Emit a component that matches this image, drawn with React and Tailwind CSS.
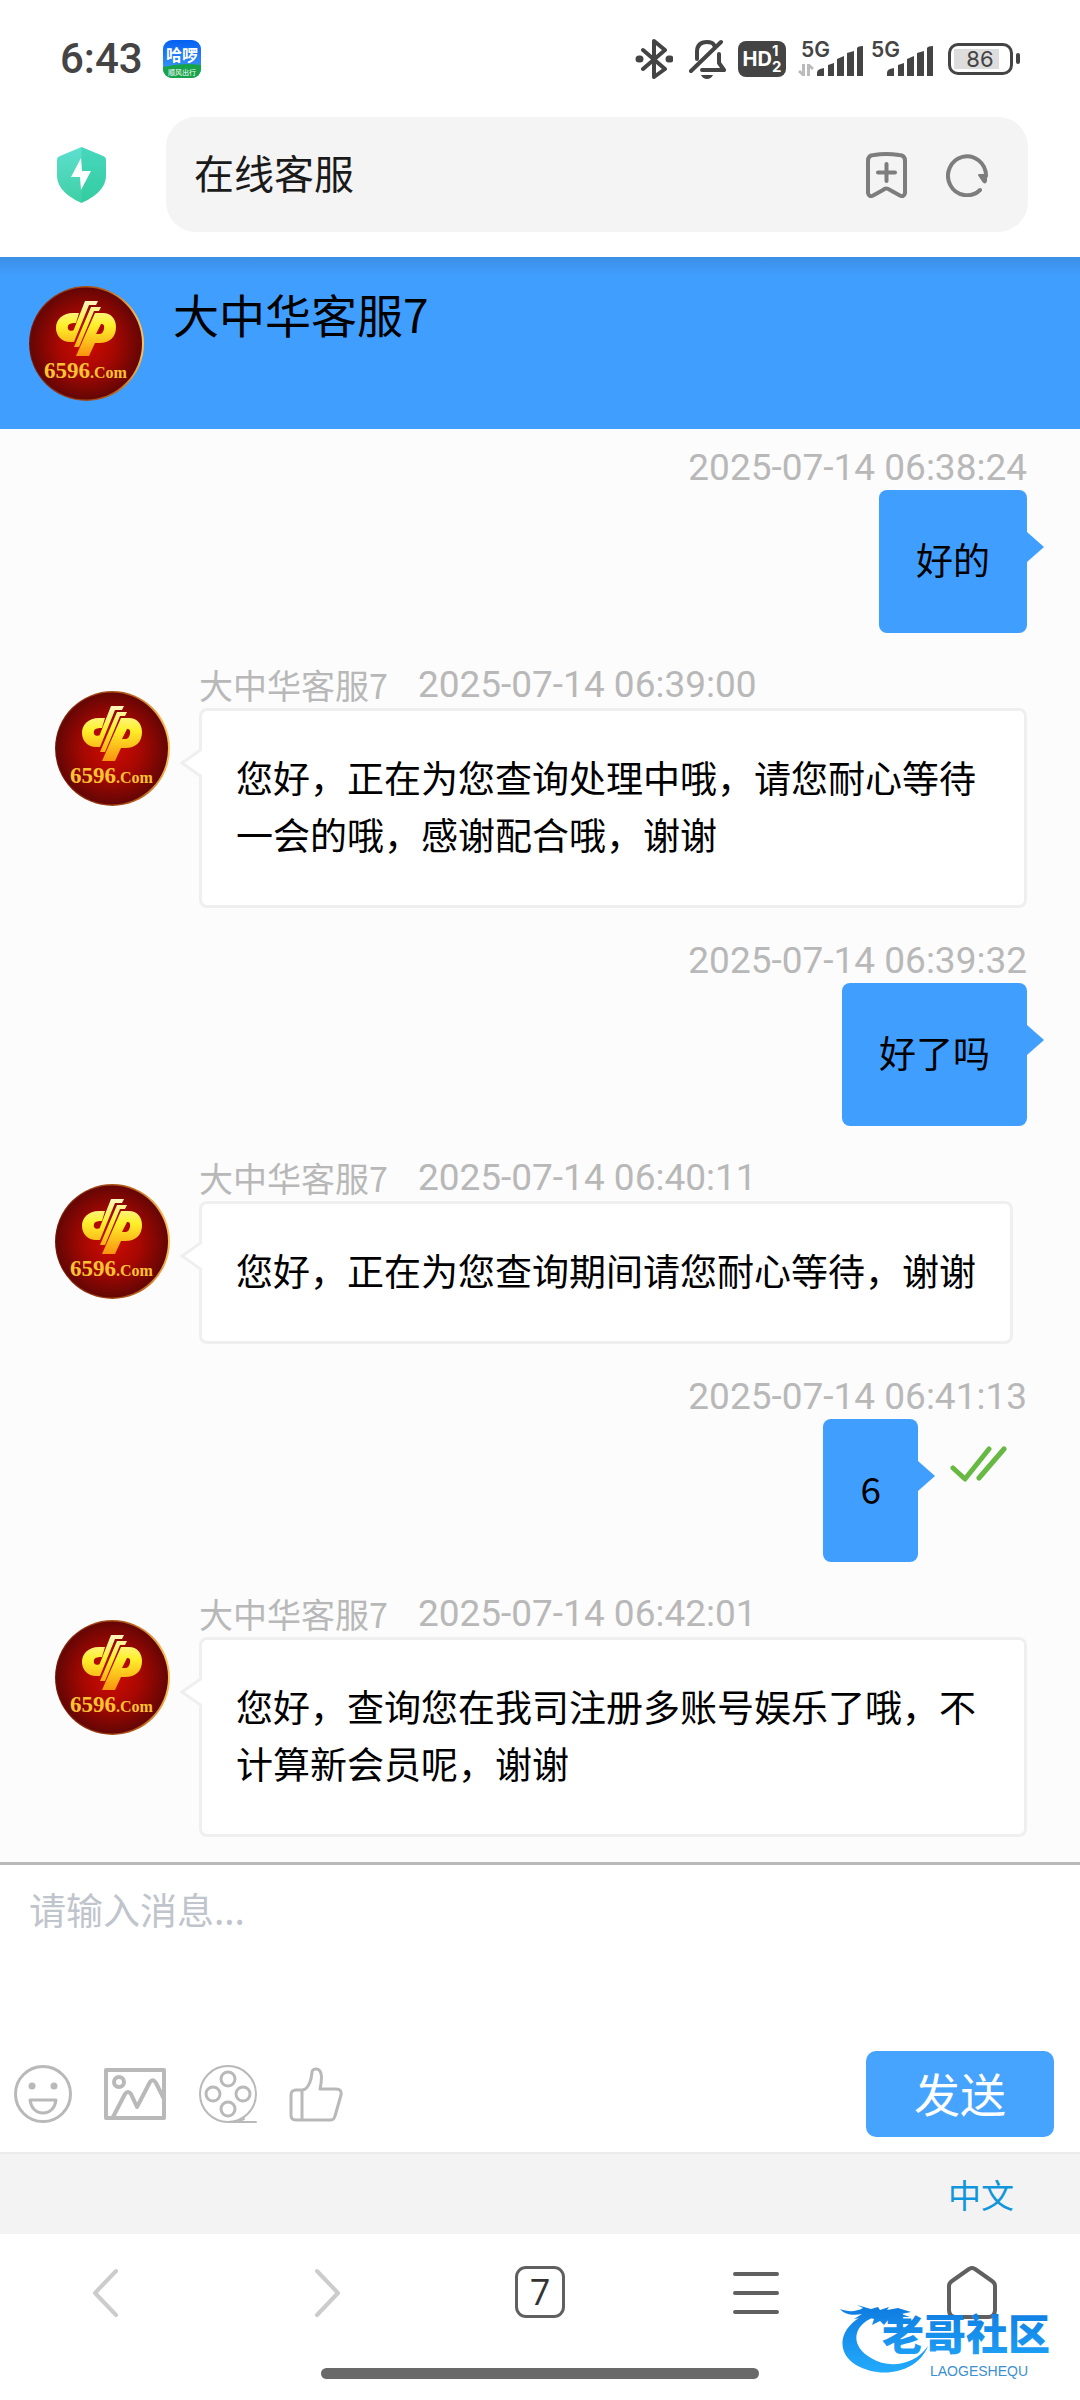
import React, { useState } from "react";

const ME_COLOR = "#409eff";

const messages = [
  { id: 1, mine: true, time: "2025-07-14 06:38:24", text: "好的" },
  { id: 2, name: "大中华客服7", time: "2025-07-14 06:39:00", text: "您好，正在为您查询处理中哦，请您耐心等待一会的哦，感谢配合哦，谢谢" },
  { id: 3, mine: true, time: "2025-07-14 06:39:32", text: "好了吗" },
  { id: 4, name: "大中华客服7", time: "2025-07-14 06:40:11", text: "您好，正在为您查询期间请您耐心等待，谢谢" },
  { id: 5, mine: true, read: true, time: "2025-07-14 06:41:13", text: "6" },
  { id: 6, name: "大中华客服7", time: "2025-07-14 06:42:01", text: "您好，查询您在我司注册多账号娱乐了哦，不计算新会员呢，谢谢" },
];

const Avatar = ({ id, className = "" }) => (
  <svg viewBox="0 0 115 115" className={`size-[115px] shrink-0 ${className}`} role="img" aria-label="客服头像">
    <defs>
      <radialGradient id={`${id}-bg`}>
        <stop offset="0" stopColor="#cf0b02" />
        <stop offset="0.5" stopColor="#a80802" />
        <stop offset="1" stopColor="#640604" />
      </radialGradient>
      <linearGradient id={`${id}-rim`} x1="0" y1="0.5" x2="1" y2="0.4">
        <stop offset="0" stopColor="#7c1a08" />
        <stop offset="0.7" stopColor="#b9601c" />
        <stop offset="1" stopColor="#ffc65a" />
      </linearGradient>
      <linearGradient id={`${id}-gold`} x1="0" y1="14" x2="0" y2="70" gradientUnits="userSpaceOnUse">
        <stop offset="0" stopColor="#fff6c8" />
        <stop offset="0.45" stopColor="#fff02a" />
        <stop offset="1" stopColor="#f9930f" />
      </linearGradient>
    </defs>
    <circle cx="57.5" cy="57.5" r="57.5" fill={`url(#${id}-rim)`} />
    <circle cx="57" cy="57.5" r="56" fill={`url(#${id}-bg)`} />
    <g fill={`url(#${id}-gold)`} fillRule="evenodd">
      <path d="M50 27H44C33 27 27 34 27 42C27 50 33 56 41 56L46 44C41 46 38 44 39 40C40 37 44 37 47 37Z" />
      <path d="M56 15H69L67 19H60L45 56H40Z" />
      <path d="M62 21H72L70 25H65L50 61H45Z" />
      <path d="M66 27H74C82 27 87 33 87 41C87 51 81 57 70 57H66L60 70H47ZM72 38L67 48H71C75 48 77 38 73 38Z" />
    </g>
    <text x="15" y="92" fill="#ffc233" fontFamily="Liberation Serif, serif" fontWeight="bold" fontSize="23">
      6596<tspan fontSize="16">.Com</tspan>
    </text>
  </svg>
);

const SignalBars = () => (
  <svg viewBox="0 0 46 30" className="h-[30px] w-[46px]" fill="#444">
    <path d="M0 30V27Q0 24 3 23L7 22V30ZM11 30V19L17 17V30ZM20 30V13L27 10V30ZM30 30V7L37 5V30ZM40 30V2Q41 0 46 0V30Z" />
  </svg>
);

const Signal = ({ data }) => (
  <div className="relative flex h-[34px] w-[62px] items-end justify-end">
    <span className="absolute left-0 top-0 font-['Inter'] text-[21px] font-semibold leading-[16px]">5G</span>
    {data && (
      <svg viewBox="0 0 16 12" className="absolute -left-[3px] bottom-0 h-[12px] w-[16px]" fill="none" stroke="#bbb" strokeWidth="3">
        <path d="M5.5 0V11L1 7M10.5 12V1L15 5" />
      </svg>
    )}
    <SignalBars />
  </div>
);

const StatusBar = () => (
  <div className="flex h-[117px] items-center justify-between px-[60px] text-[#444]">
    <div className="flex items-center gap-5">
      <span className="font-['Roboto'] text-[42px] font-medium leading-[48px]">6:43</span>
      <svg viewBox="0 0 38 38" className="size-[38px]">
        <defs>
          <clipPath id="app-clip"><rect width="38" height="38" rx="9" /></clipPath>
          <linearGradient id="app-sky" x1="0" y1="0" x2="0" y2="1">
            <stop offset="0" stopColor="#0560f2" />
            <stop offset="1" stopColor="#4aa4f5" />
          </linearGradient>
        </defs>
        <g clipPath="url(#app-clip)">
          <rect width="38" height="38" fill="url(#app-sky)" />
          <path d="M0 27Q20 22 38 25V38H0Z" fill="#16a34a" />
          <text x="19" y="21" textAnchor="middle" fontSize="16" fontWeight="bold" fill="#fff">哈啰</text>
          <text x="19" y="35" textAnchor="middle" fontSize="7" fill="#fff">顺风出行</text>
        </g>
      </svg>
    </div>
    <div className="flex items-center">
      <svg viewBox="0 0 38 40" className="mr-[15px] h-[40px] w-[38px]" fill="none" stroke="#444" strokeWidth="4" strokeLinejoin="round" strokeLinecap="round">
        <path d="M8 11L30 30L19 38V2L30 11L8 30" />
        <path d="M4 20H5M34 20H35" strokeWidth="7" />
      </svg>
      <svg viewBox="0 0 38 40" className="mr-[12px] h-[40px] w-[38px]" fill="none" stroke="#444" strokeWidth="4" strokeLinejoin="round" strokeLinecap="round">
        <path d="M3 32L33 3M9 20V13C9 6 13 3 19 3C22 3 25 4 26 6M31 15V24L36 31H14" />
        <path d="M13 36H25Q23 40 19 40Q15 40 13 36Z" fill="#444" stroke="none" />
      </svg>
      <div className="mr-[15px] flex h-[36px] w-[48px] items-center justify-center rounded-lg bg-[#444] font-['Inter'] text-[20px] font-bold text-white">
        <span>HD</span>
        <span className="flex flex-col text-[15px] leading-[16px]"><span>1</span><span>2</span></span>
      </div>
      <div className="mr-[15px] flex gap-2">
        <Signal data />
        <Signal />
      </div>
      <div className="flex items-center gap-[3px]">
        <div className="flex h-[32px] w-[65px] rounded-[10px] border-[3px] border-[#444] p-[3px]">
          <span className="w-[52px] bg-[linear-gradient(to_right,#ddd_86%,transparent_86%)] text-center font-['Inter'] text-[22px] leading-[20px]">86</span>
        </div>
        <span className="h-[11px] w-1 rounded bg-[#444]" />
      </div>
    </div>
  </div>
);

const AddressBar = () => (
  <div className="flex items-center bg-white pb-[25px] pl-[57px] pr-[52px]">
    <svg viewBox="0 0 49 56" className="mr-[60px] h-[56px] w-[49px] shrink-0">
      <defs>
        <linearGradient id="shield" x1="0" y1="0" x2="0" y2="1">
          <stop offset="0" stopColor="#5edfd0" />
          <stop offset="1" stopColor="#3ecfa4" />
        </linearGradient>
      </defs>
      <path d="M24.5 0L46 9Q49 10 49 13V28C49 42 37 50 24.5 56C12 50 0 42 0 28V13Q0 10 3 9Z" fill="url(#shield)" />
      <path d="M24.5 0L46 9Q49 10 49 13V28C49 42 37 50 24.5 56Z" fill="#1fc99c" opacity="0.35" />
      <path d="M24 11L14 30H23L24 43L34 24H25Z" fill="#fff" />
    </svg>
    <div className="flex h-[115px] flex-1 items-center gap-[39px] rounded-[30px] bg-[#f4f4f4] pl-[28px] pr-[40px]">
      <input aria-label="地址栏" defaultValue="在线客服" className="min-w-0 flex-1 bg-transparent pb-[5px] text-[40px] leading-[60px] text-[#1a1a1a] outline-none" />
      <button type="button" aria-label="添加书签">
        <svg viewBox="0 0 41 46" className="h-[46px] w-[41px]" fill="none" stroke="#7d7d7d" strokeWidth="4" strokeLinejoin="round" strokeLinecap="round">
          <path d="M2 41V9Q2 3 8 3Q20 1 33 3Q39 3 39 9V41Q38 46 33 43L24 38Q20 35 17 38L8 43Q3 46 2 41ZM20.5 12V29M12 20.5H29" />
        </svg>
      </button>
      <button type="button" aria-label="刷新">
        <svg viewBox="0 0 42 44" className="h-[44px] w-[42px]" fill="none" stroke="#7d7d7d" strokeWidth="4" strokeLinecap="round">
          <path d="M34 37A19 19.5 0 1 1 40 23" />
          <path d="M33 22H40V28Q39 31 37 28Z" fill="#7d7d7d" strokeWidth="2" strokeLinejoin="round" />
        </svg>
      </button>
    </div>
  </div>
);

const ReadTick = () => (
  <svg viewBox="0 0 57 36" className="ml-[32px] mr-[20px] mt-[27px] h-[36px] w-[57px]" fill="none" stroke="#67b943" strokeWidth="5" strokeLinecap="round" strokeLinejoin="round">
    <path d="M3 22L15 33L39 3M29 32L54 3" />
  </svg>
);

const MyMessage = ({ msg }) => (
  <li className="flex flex-col items-end">
    <time className="h-[43px] font-['Roboto'] text-[37px] leading-[42px] text-[#b8b8b8]">{msg.time}</time>
    <div className="flex items-start">
      <div className="relative rounded-lg bg-[#409eff] px-[37px] pb-[45px] pt-[41px] text-[37px] leading-[57px] text-black">
        {msg.text}
        <svg viewBox="0 0 17 30" className="absolute left-full top-[42px] h-[30px] w-[17px]">
          <path d="M0 0L17 15L0 30Z" fill={ME_COLOR} />
        </svg>
      </div>
      {msg.read && <ReadTick />}
    </div>
  </li>
);

const AgentMessage = ({ msg }) => (
  <li className="flex items-start">
    <Avatar id={`m${msg.id}`} className="mt-[26px]" />
    <div className="ml-[29px] min-w-0">
      <p className="flex h-[43px] gap-[30px] leading-[40px] text-[#b8b8b8]">
        <span className="text-[34px]">{msg.name}</span>
        <time className="font-['Roboto'] text-[37px]">{msg.time}</time>
      </p>
      <div className="relative w-fit rounded-lg border-[3px] border-[#efefef] bg-white px-[34px] pb-[42px] pt-[38px] text-[37px] leading-[57px] text-black">
        {msg.text}
        <svg viewBox="0 0 22 32" className="absolute right-full top-[36px] h-[32px] w-[22px]">
          <path d="M22 2L2 16L22 30" fill="#fff" stroke="#efefef" strokeWidth="3" />
        </svg>
      </div>
    </div>
  </li>
);

const tools = [
  {
    label: "表情", cls: "w-[58px]", box: "0 0 58 58",
    art: (
      <>
        <circle cx="29" cy="29" r="27.5" />
        <path d="M16 35H42C41 43 36 48 29 48C22 48 17 43 16 35Z" />
        <circle cx="18" cy="21" r="3.5" fill="#b9b9b9" stroke="none" />
        <circle cx="40" cy="21" r="3.5" fill="#b9b9b9" stroke="none" />
      </>
    ),
  },
  {
    label: "图片", cls: "w-[64px]", box: "0 0 64 58",
    art: <g strokeWidth="4"><path d="M3 5H61V53H3ZM10 52L22 29Q25 25 28 29L34 42L47 17Q50 13 53 18L61 34" /><circle cx="16" cy="17" r="5" /></g>,
  },
  {
    label: "视频", cls: "w-[60px]", box: "0 0 60 58",
    art: (
      <>
        <circle cx="30" cy="29" r="28" strokeWidth="2" />
        <circle cx="30" cy="14" r="7" /><circle cx="30" cy="44" r="7" />
        <circle cx="15" cy="29" r="7" /><circle cx="45" cy="29" r="7" />
        <path d="M31 57Q40 57 46 54M34 57H58" strokeWidth="2" />
      </>
    ),
  },
  {
    label: "点赞", cls: "w-[54px]", box: "0 0 54 58",
    art: <path d="M13 25H7Q2 25 2 30V50Q2 55 7 55H42Q45 55 46 51L52 30Q53 24 47 24H31C33 15 34 4 27 4C21 4 24 10 21 17Q18 25 13 25V55" />,
  },
];

const Composer = () => {
  const [draft, setDraft] = useState("");
  return (
    <form onSubmit={e => e.preventDefault()} className="flex flex-col border-t-[3px] border-[#b9b9b9] bg-white pb-[15px]">
      <textarea
        aria-label="消息" placeholder="请输入消息..." value={draft} onChange={e => setDraft(e.target.value)}
        className="block h-[186px] w-full resize-none px-[29px] pt-[16px] text-[37px] leading-[57px] outline-none placeholder:text-[#c0c4cc]"
      />
      <div className="flex items-center justify-between pl-[14px] pr-[26px]">
        <div className="flex items-center gap-[31px]">
          {tools.map(t => (
            <button key={t.label} type="button" aria-label={t.label}>
              <svg viewBox={t.box} className={`h-[58px] ${t.cls}`} fill="none" stroke="#b9b9b9" strokeWidth="3" strokeLinejoin="round" strokeLinecap="round">
                {t.art}
              </svg>
            </button>
          ))}
        </div>
        <button type="submit" className="h-[86px] w-[188px] rounded-[10px] bg-[#46a4ff] pb-[5px] text-[46px] leading-[60px] text-white">发送</button>
      </div>
    </form>
  );
};

const navIcon = "h-[54px] w-[52px]";

const BrowserNav = () => (
  <nav className="grid grid-cols-5 justify-items-center pt-[32px] text-[#606060]">
    <button type="button" aria-label="后退">
      <svg viewBox="0 0 52 54" className={navIcon} fill="none" stroke="#ccc" strokeWidth="4" strokeLinecap="round" strokeLinejoin="round">
        <path d="M34 5L13 27L34 49" />
      </svg>
    </button>
    <button type="button" aria-label="前进">
      <svg viewBox="0 0 52 54" className={navIcon} fill="none" stroke="#ccc" strokeWidth="4" strokeLinecap="round" strokeLinejoin="round">
        <path d="M19 5L40 27L19 49" />
      </svg>
    </button>
    <button type="button" aria-label="标签页" className="h-[52px] w-[50px] rounded-[11px] border-[3px] border-[#606060] font-['Open_Sans'] text-[36px] leading-[46px] text-[#333]">7</button>
    <button type="button" aria-label="菜单">
      <svg viewBox="0 0 52 54" className={navIcon} fill="none" stroke="currentColor" strokeWidth="4" strokeLinecap="round">
        <path d="M5 8H47M5 27H47M5 46H47" />
      </svg>
    </button>
    <button type="button" aria-label="主页">
      <svg viewBox="0 0 52 54" className={navIcon} fill="none" stroke="currentColor" strokeWidth="4" strokeLinejoin="round">
        <path d="M3 20Q3 17 6 15L23 3Q26 1 29 3L46 15Q49 17 49 20V44Q49 51 42 51H10Q3 51 3 44Z" />
      </svg>
    </button>
  </nav>
);

const Watermark = () => (
  <svg viewBox="0 0 230 84" className="pointer-events-none absolute bottom-[20px] right-[12px] h-[84px] w-[230px]" role="img" aria-label="老哥社区">
    <defs>
      <linearGradient id="wm" x1="0" y1="0" x2="0" y2="84" gradientUnits="userSpaceOnUse">
        <stop offset="0" stopColor="#0b74dc" />
        <stop offset="1" stopColor="#25b0ff" />
      </linearGradient>
    </defs>
    <g fill="url(#wm)">
      <path d="M32 17C4 26 -6 54 18 69C44 84 80 76 90 50C78 68 52 74 33 62C12 50 14 30 36 21Z" />
      <path d="M2 13C10 16 18 16 25 12L19 9L33 13L40 11L42 14L51 11L49 14L60 12L73 16L63 18L72 21L61 21L71 26L58 25L51 23L46 29L42 25L34 29L36 23L28 21L16 23L24 18C14 20 6 18 2 13Z" />
      <text x="44" y="54" fontSize="42" fontWeight="900">老哥社区</text>
    </g>
    <text x="92" y="80" fontSize="14" fontFamily="Liberation Sans, sans-serif" fill="#3d8fd0">LAOGESHEQU</text>
  </svg>
);

export default function App() {
  return (
    <div className="relative min-h-screen bg-white font-['Noto_Sans_CJK_SC',sans-serif]">
      <StatusBar />
      <AddressBar />
      <header className="flex h-[172px] items-start bg-[#409eff] bg-[linear-gradient(to_bottom,#3c8fe5,#409eff_20px)] pl-[29px] pt-[29px]">
        <Avatar id="head" />
        <h1 className="-mt-[3px] ml-[29px] text-[46px] leading-[60px] text-black">大中华客服7</h1>
      </header>
      <ul className="flex flex-col gap-8 bg-[#fcfcfc] pb-[25px] pl-[55px] pr-[53px] pt-[18px]">
        {messages.map(m => (m.mine ? <MyMessage key={m.id} msg={m} /> : <AgentMessage key={m.id} msg={m} />))}
      </ul>
      <Composer />
      <div className="flex h-[82px] items-center justify-end border-t-2 border-[#ebebeb] bg-[#f3f3f3] pr-[66px]">
        <a href="#lang" className="text-[33px] leading-[50px] text-[#1296db]">中文</a>
      </div>
      <BrowserNav />
      <div className="mx-auto mt-[48px] h-[11px] w-[438px] max-w-full rounded-full bg-[#696969]" />
      <Watermark />
    </div>
  );
}
